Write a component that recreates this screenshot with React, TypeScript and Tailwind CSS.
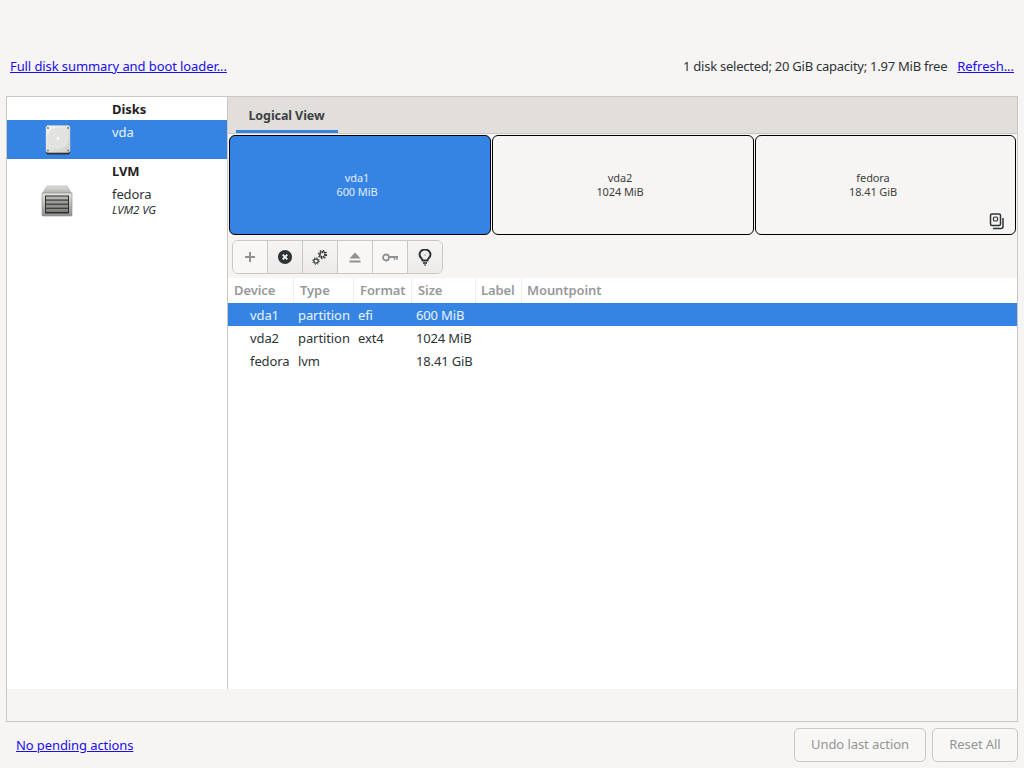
import React from "react";

const font = { fontFamily: '"Noto Sans", sans-serif' };

function DiskIcon() {
  return (
    <svg width="26" height="30" viewBox="0 0 26 30">
      <defs>
        <linearGradient id="dk" x1="0" y1="0" x2="1" y2="1">
          <stop offset="0" stopColor="#f4f4f2" />
          <stop offset="1" stopColor="#cfcfcb" />
        </linearGradient>
      </defs>
      <rect x="1" y="1" width="24" height="28.5" rx="2" fill="#2f2f2f" />
      <rect x="1" y="0.5" width="24" height="27" rx="2" fill="url(#dk)" stroke="#c8c8c4" strokeWidth="0.5" />
      <circle cx="13" cy="13.5" r="10.5" fill="#e2e2df" />
      <circle cx="13" cy="13.5" r="1.4" fill="#f8f8f8" />
      <circle cx="3" cy="3" r="0.9" fill="#777" />
      <circle cx="23" cy="3" r="0.9" fill="#777" />
      <circle cx="3" cy="25.5" r="0.9" fill="#777" />
      <circle cx="23" cy="25.5" r="0.9" fill="#777" />
    </svg>
  );
}

function VgIcon() {
  return (
    <svg width="32" height="32" viewBox="0 0 32 32">
      <defs>
        <linearGradient id="vgt" x1="0" y1="0" x2="0" y2="1">
          <stop offset="0" stopColor="#e2e2e0" />
          <stop offset="1" stopColor="#a8a8a6" />
        </linearGradient>
        <linearGradient id="vgb" x1="0" y1="0" x2="0" y2="1">
          <stop offset="0" stopColor="#e4e4e2" />
          <stop offset="1" stopColor="#8f8f8c" />
        </linearGradient>
      </defs>
      <path d="M6 1h20l5 8H1z" fill="url(#vgt)" stroke="#a8a8a5" strokeWidth="0.6" />
      <rect x="1" y="8" width="30" height="23" rx="1" fill="url(#vgb)" stroke="#8a8a88" strokeWidth="0.6" />
      <rect x="4" y="10.5" width="24" height="18" fill="#2e2e2e" />
      <rect x="5" y="11.5" width="22" height="3" fill="#b5b5b3" />
      <rect x="5" y="15.6" width="22" height="3" fill="#9c9c9a" />
      <rect x="5" y="19.7" width="22" height="3" fill="#929290" />
      <rect x="5" y="23.8" width="22" height="3" fill="#878785" />
    </svg>
  );
}

function HeaderCell({ className, children }: { className: string; children?: React.ReactNode }) {
  return (
    <div className={`${className} h-[25px] flex items-center border-r border-[#f1efed] shrink-0 font-semibold text-[#97999a]`}>
      {children}
    </div>
  );
}

function Row({ d, t, f, s, selected }: { d: string; t: string; f: string; s: string; selected?: boolean }) {
  return (
    <div className={`h-[23px] pt-[2px] flex items-center ${selected ? "bg-[#3584e4] text-white/90" : "text-[#2e3436]"}`}>
      <div className="w-[70px] pl-[22px] shrink-0">{d}</div>
      <div className="w-[60px] shrink-0">{t}</div>
      <div className="w-[58px] shrink-0">{f}</div>
      <div className="w-[80px] shrink-0 tracking-[-0.15px]">{s}</div>
    </div>
  );
}

function ToolBtn({ children, dark, first, last }: { children: React.ReactNode; dark?: boolean; first?: boolean; last?: boolean }) {
  return (
    <div
      className={`${last ? "w-[34px] rounded-r-[5px]" : "w-[35px] border-r border-[#cdc7c2]"} h-full flex items-center justify-center ${
        dark ? "bg-gradient-to-b from-[#f6f5f4] to-[#ecebe9]" : "bg-[#f8f7f6]"
      } ${first ? "rounded-l-[5px]" : ""}`}
    >
      {children}
    </div>
  );
}

function Segment({ name, size, selected, className, children }: { name: string; size: string; selected?: boolean; className: string; children?: React.ReactNode }) {
  return (
    <div
      className={`relative ${className} h-[100px] rounded-[6px] border border-black flex flex-col items-center justify-center text-[11px] leading-[14px] tracking-[-0.1px] ${
        selected ? "bg-[#3584e4] text-white/85" : "bg-[#f6f5f4] text-[#3d3f40]"
      }`}
    >
      <div>{name}</div>
      <div>{size}</div>
      {children}
    </div>
  );
}

export default function App() {
  return (
    <div style={font} className="w-[1024px] h-[768px] flex flex-col bg-[#f6f5f4] text-[13px] tracking-[-0.09px] text-[#2e3436] overflow-hidden">
      <div className="h-[96px] shrink-0 flex items-start justify-between pt-[57px] pl-[10px] pr-[10px]">
        <a className="leading-[18px] text-[#1a0dee] underline">Full disk summary and boot loader...</a>
        <div className="flex leading-[18px] gap-[10px]">
          <span className="tracking-[-0.25px]">1 disk selected; 20 GiB capacity; 1.97 MiB free</span>
          <a className="text-[#1a0dee] underline tracking-[-0.03px]">Refresh...</a>
        </div>
      </div>

      <div className="mx-[6px] h-[626px] shrink-0 border border-[#cdc7c2] flex flex-col">
        <div className="flex-1 flex min-h-0">
          <div className="w-[221px] shrink-0 bg-white border-r border-[#cdc7c2]">
            <div className="h-[23px] pt-[2px] flex items-center pl-[105px] font-bold text-[#1f2223]">Disks</div>
            <div className="h-[39px] flex bg-[#3584e4] text-white/90">
              <div className="w-[100px] flex items-center justify-center pl-[1px] pt-[1px]"><DiskIcon /></div>
              <div className="pl-[5px] pt-[3px] leading-[18px]">vda</div>
            </div>
            <div className="h-[25px] flex items-center pl-[105px] font-bold text-[#1f2223]">LVM</div>
            <div className="flex h-[44px]">
              <div className="w-[100px] flex items-start justify-center pt-[1px]"><VgIcon /></div>
              <div className="pl-[5px] pt-[2px]">
                <div className="leading-[17px]">fedora</div>
                <div className="italic text-[11.5px] leading-[13px]">LVM2 VG</div>
              </div>
            </div>
          </div>

          <div className="flex-1 flex flex-col min-w-0">
            <div className="h-[37px] shrink-0 bg-[#e1dedb] border-b border-[#cdc7c2] pl-[8px]">
              <div className="w-[102px] h-[36px] pt-[5px] pr-[1px] border-b-[3px] border-[#3584e4] flex items-center justify-center font-bold text-[12.5px] text-[#3d4244]">
                Logical View
              </div>
            </div>
            <div className="flex gap-[1px] pl-[1px] pr-[1px] pt-[1px] shrink-0">
              <Segment name="vda1" size="600 MiB" selected className="w-[262px] pr-[6px]" />
              <Segment name="vda2" size="1024 MiB" className="w-[262px] pr-[6px]" />
              <Segment name="fedora" size="18.41 GiB" className="flex-1 pr-[25px]">
                <svg className="absolute right-[10px] bottom-[4px]" width="16" height="17" viewBox="0 0 16 17" fill="none" stroke="#2e3436" strokeWidth="1.5">
                  <rect x="1.5" y="1" width="10" height="11.5" rx="1.5" />
                  <rect x="4.5" y="4" width="4" height="4" rx="1" strokeWidth="1.2" />
                  <path d="M14 5v8.5a2 2 0 0 1-2 2H4" />
                </svg>
              </Segment>
            </div>
            <div className="h-[43px] shrink-0 pl-[4px] pt-[5px]">
              <div className="h-[34px] w-fit flex border border-[#cdc7c2] rounded-[6px]">
                <ToolBtn first>
                  <svg width="12" height="12" viewBox="0 0 12 12" fill="#8f9192"><path d="M5 1h2v4h4v2H7v4H5V7H1V5h4z" /></svg>
                </ToolBtn>
                <ToolBtn dark>
                  <svg width="14" height="14" viewBox="0 0 14 14">
                    <circle cx="7" cy="7" r="7" fill="#2e3436" />
                    <path d="M4.7 4.7l4.6 4.6M9.3 4.7l-4.6 4.6" stroke="#f6f5f4" strokeWidth="1.9" />
                  </svg>
                </ToolBtn>
                <ToolBtn dark>
                  <svg width="16" height="16" viewBox="0 0 16 16" fill="none" stroke="#2e3436">
                    <circle cx="10.5" cy="5.5" r="2.6" strokeWidth="2" strokeDasharray="1.6 0.6" />
                    <circle cx="10.5" cy="5.5" r="4" strokeWidth="1.4" strokeDasharray="1.5 1.6" />
                    <circle cx="4" cy="12" r="2.2" strokeWidth="1.2" />
                    <circle cx="4" cy="12" r="3.3" strokeWidth="1" strokeDasharray="1.2 1.4" />
                  </svg>
                </ToolBtn>
                <ToolBtn>
                  <svg width="12" height="11" viewBox="0 0 12 11" fill="#8f9192"><path d="M6 0.5l5.5 6H0.5z" /><rect x="0.5" y="8.5" width="11" height="2" /></svg>
                </ToolBtn>
                <ToolBtn>
                  <svg width="16" height="9" viewBox="0 0 16 9" fill="none" stroke="#8f9192">
                    <circle cx="4" cy="4.5" r="3" strokeWidth="1.8" />
                    <path d="M7 4h9" strokeWidth="2" />
                    <path d="M12.5 4v3M15 4v3" strokeWidth="1.4" />
                  </svg>
                </ToolBtn>
                <ToolBtn dark last>
                  <svg width="14" height="17" viewBox="0 0 14 17" fill="none" stroke="#2e3436">
                    <path d="M4.6 11.5c0-2-3.1-3-3.1-6a5.5 5 0 0 1 11 0c0 3-3.1 4-3.1 6z" strokeWidth="2" />
                    <path d="M5.5 5.5h3l-1.5 2z" fill="#b9b9b7" stroke="none" />
                    <path d="M5 14h4" strokeWidth="1.6" />
                    <path d="M6 16h2" strokeWidth="1.2" />
                  </svg>
                </ToolBtn>
              </div>
            </div>
            <div className="flex-1 bg-white min-h-0">
              <div className="flex">
                <HeaderCell className="w-[66px] pl-[6px]">Device</HeaderCell>
                <HeaderCell className="w-[60px] pl-[6px]">Type</HeaderCell>
                <HeaderCell className="w-[58px] pl-[6px]">Format</HeaderCell>
                <HeaderCell className="w-[64px] pl-[6px]">Size</HeaderCell>
                <HeaderCell className="w-[46px] pl-[5px]">Label</HeaderCell>
                <div className="pl-[5px] h-[25px] flex items-center font-semibold text-[#97999a]">Mountpoint</div>
              </div>
              <Row d="vda1" t="partition" f="efi" s="600 MiB" selected />
              <Row d="vda2" t="partition" f="ext4" s="1024 MiB" />
              <Row d="fedora" t="lvm" f="" s="18.41 GiB" />
            </div>
          </div>
        </div>
        <div className="h-[32px] shrink-0 bg-[#f6f5f4]" />
      </div>

      <div className="flex-1 flex items-start justify-between pl-[16px] pr-[6px] pt-[6px]">
        <a className="mt-[8px] leading-[18px] text-[#1a0dee] underline">No pending actions</a>
        <div className="flex gap-[6px]">
          <div className="w-[132px] h-[34px] rounded-[5px] border border-[#cdc7c2] bg-[#f8f7f6] flex items-center justify-center text-[#929595]">Undo last action</div>
          <div className="w-[86px] h-[34px] rounded-[5px] border border-[#cdc7c2] bg-[#f8f7f6] flex items-center justify-center text-[#929595]">Reset All</div>
        </div>
      </div>
    </div>
  );
}
